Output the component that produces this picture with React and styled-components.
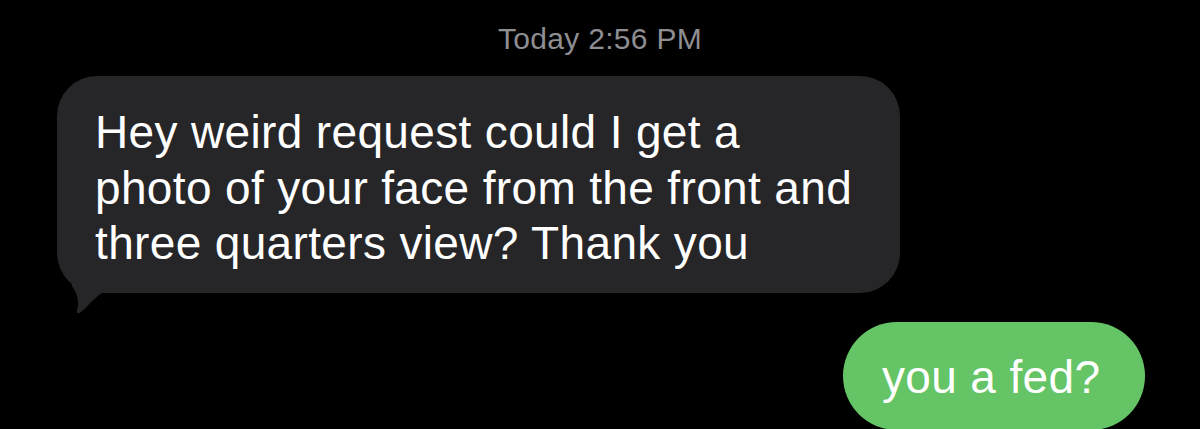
import React from 'react'
import styled, { createGlobalStyle } from 'styled-components'

const Global = createGlobalStyle`
  html, body {
    margin: 0;
    padding: 0;
    background: #000;
  }
  body {
    font-family: "Liberation Sans", Arial, sans-serif;
    -webkit-font-smoothing: antialiased;
  }
`

const Thread = styled.div`
  width: 1200px;
  height: 429px;
  overflow: hidden;
  background: #000;
  display: flex;
  flex-direction: column;
  padding-top: 20px;
  box-sizing: border-box;
`

const Stamp = styled.div`
  text-align: center;
  color: #8e8e93;
  font-size: 30px;
  line-height: 38px;
  letter-spacing: 0.3px;
`

const Row = styled.div`
  display: flex;
  justify-content: ${p => (p.$mine ? 'flex-end' : 'flex-start')};
  padding: ${p => (p.$mine ? '0 55px 0 0' : '0 0 0 57px')};
  margin-top: ${p => p.$gap}px;
`

const Bubble = styled.div`
  position: relative;
  box-sizing: border-box;
  background: ${p => (p.$mine ? '#65c466' : '#262628')};
  color: #fff;
  font-size: 46px;
  line-height: 55.5px;
  letter-spacing: 0.35px;
  border-radius: ${p => (p.$mine ? '54px' : '40px')};
  width: ${p => p.$w}px;
  height: ${p => p.$h}px;
  padding: ${p => (p.$mine ? '28px 0 0 39px' : '29px 0 0 38px')};
`

const Tail = styled.svg`
  position: absolute;
  left: 10px;
  top: calc(100% - 15px);
  width: 40px;
  height: 38px;
`

export default function App() {
  return (
    <>
      <Global />
      <Thread>
        <Stamp>Today 2:56 PM</Stamp>
        <Row $gap={18}>
          <Bubble $w={843} $h={217}>
            Hey weird request could I get a<br />
            photo of your face from the front and<br />
            three quarters view? Thank you
            <Tail viewBox="0 0 40 38">
              <path d="M4 0 L5 8 C10 15 13 24 10 32 C9 36 11 36 14 34 C20 29 25 22 35 15 L35 0 Z" fill="#262628" />
            </Tail>
          </Bubble>
        </Row>
        <Row $mine $gap={29}>
          <Bubble $mine $w={302} $h={108}>you a fed?</Bubble>
        </Row>
      </Thread>
    </>
  )
}
